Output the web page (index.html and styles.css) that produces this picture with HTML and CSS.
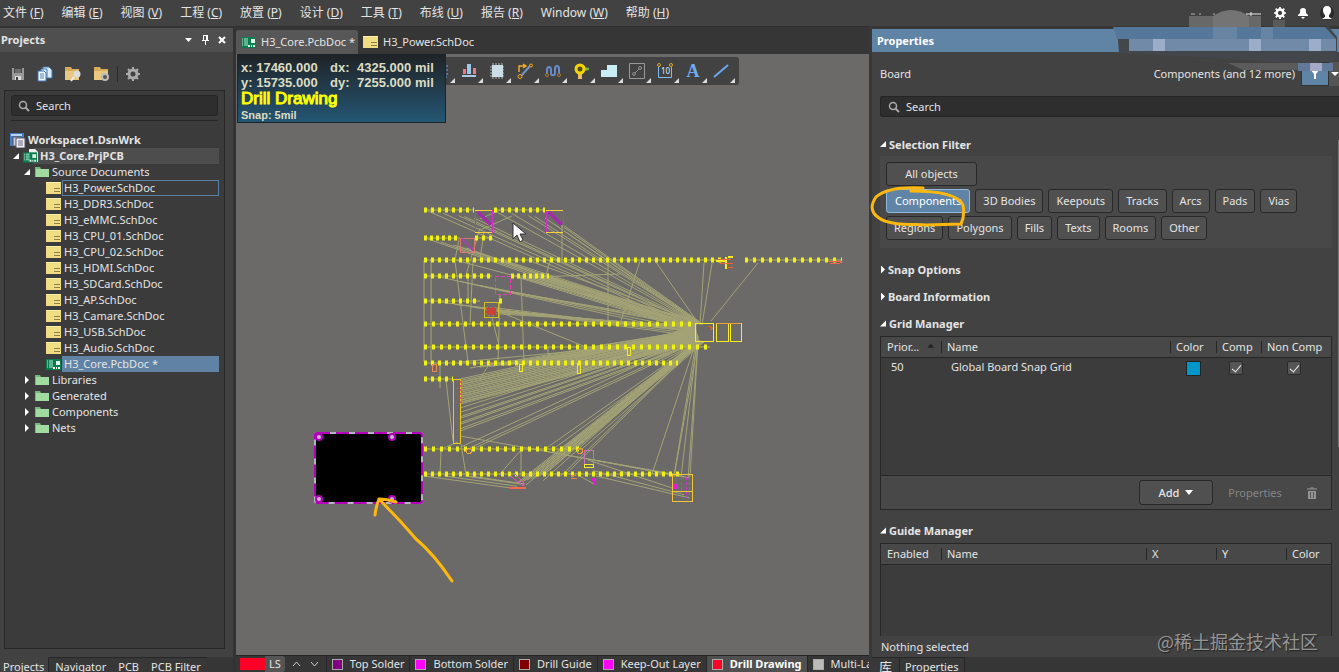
FILE: index.html
```html
<!DOCTYPE html>
<html lang="zh-CN">
<head>
<meta charset="utf-8">
<title>H3_Core.PcbDoc</title>
<link rel="stylesheet" href="styles.css">
</head>
<body>
<svg class="defs" aria-hidden="true">
  <symbol id="sch" viewBox="0 0 15 12"><rect width="15" height="12" fill="#f0dc82"/><path d="M0 0h15v1H0z" fill="#fff0b0"/><path d="M8 6.500h6M8 9.500h6" stroke="#8f7d45"/></symbol>
  <symbol id="pcb" viewBox="0 0 15 12"><path d="M0 1h15v11H0z" fill="#087d50"/><path d="M1 3h1M3 3h4M1 5h1M3 5h4M1 7h1M3 7h4M1 9h1M3 9h4" stroke="#b9ead0"/><path d="M10 3h4v4h-4z" fill="#e8f5e9"/><path d="M7 10h2M10 10h1M12 10h2" stroke="#e8f5e9" stroke-width="2"/></symbol>
  <symbol id="dir" viewBox="0 0 14 12"><path d="M0 1h5l1 2h7v8H0z" fill="#74b975"/><path d="M1 3h13v8H1z" fill="#a2dba2"/></symbol>
  <symbol id="mag" viewBox="0 0 12 12"><circle cx="5" cy="5" r="3.500" fill="none" stroke="#aaa" stroke-width="1.500"/><path d="M7.500 7.500 11 11" stroke="#aaa" stroke-width="2"/></symbol>
  <symbol id="gear" viewBox="0 0 14 14"><circle cx="7" cy="7" r="4" fill="none" stroke="currentColor" stroke-width="3"/><path d="M7 0v3M7 11v3M0 7h3M11 7h3M2 2l2 2M10 10l2 2M2 12l2-2M10 4l2-2" stroke="currentColor" stroke-width="2"/></symbol>
</svg>
<header class="menubar">
  <nav class="menus">
    <button>文件 (<u>F</u>)</button><button>编辑 (<u>E</u>)</button><button>视图 (<u>V</u>)</button><button>工程 (<u>C</u>)</button><button>放置 (<u>P</u>)</button><button>设计 (<u>D</u>)</button><button>工具 (<u>T</u>)</button><button>布线 (<u>U</u>)</button><button>报告 (<u>R</u>)</button><button>Window (<u>W</u>)</button><button>帮助 (<u>H</u>)</button>
  </nav>
  <div class="account">
    <button aria-label="Settings"><svg width="12" height="12"><use href="#gear"/></svg></button>
    <button aria-label="Notifications"><svg width="12" height="12"><path d="M1 9V8l2-2V4c0-2 1-3 3-3s3 1 3 3v2l2 2v1zM4 10h4l-2 2z" fill="#fff"/></svg></button>
    <button aria-label="Account"><svg width="14" height="14"><circle cx="7" cy="7" r="7" fill="#2c2c2c"/><path d="M7 0c3 0 4 2 4 4 0 3-1 4-2 5v2l3 2H2l3-2V9C4 8 3 7 3 4c0-2 1-4 4-4z" fill="#fff"/></svg></button>
  </div>
</header>
<main class="workspace">
  <section class="projects">
    <div class="title"><h2>Projects</h2>
      <svg width="8" height="8"><path d="M0 2h7L3.500 6z" fill="#fff"/></svg>
      <svg width="9" height="10"><path d="M2 0h5v5h1v1H1V5h1zM4 6h1v4H4z" fill="#fff"/><path d="M3 1h2v4H3z" fill="#555"/></svg>
      <svg width="8" height="8"><path d="M1 1l6 6M7 1 1 7" stroke="#fff" stroke-width="2"/></svg>
    </div>
    <div class="tools">
      <button aria-label="Save"><svg width="16" height="16"><path d="M2 2h12v12H2z" fill="#999"/><path d="M4 2h8v5H4z" fill="#444"/><path d="M5 4h6M5 6h6" stroke="#999"/><path d="M5 10h6v4H5z" fill="#ddd"/><path d="M6 11h2v3H6z" fill="#444"/></svg></button>
      <button aria-label="Copy"><svg width="16" height="16"><path d="M6 1h6l3 3v8H6z" fill="#dceafc" stroke="#4176b5"/><path d="M4 3h6v9H4z" fill="#dceafc" stroke="#4176b5"/><path d="M1 5h6l2 2v8H1z" fill="#edf5ff" stroke="#4176b5"/><path d="M3 8h4M3 10h4M3 12h4" stroke="#5685bd"/></svg></button>
      <button aria-label="Find folder"><svg width="18" height="16"><path d="M1 1h6l1 2h7v11H1z" fill="#d7ac5c"/><path d="M1 5h14v9H1z" fill="#e8c883"/><circle cx="13" cy="8" r="3.500" fill="#ddd"/><path d="M10 11l-3 4" stroke="#eee" stroke-width="2"/></svg></button>
      <button aria-label="Folder settings"><svg width="18" height="16"><path d="M1 1h6l1 2h7v11H1z" fill="#d7ac5c"/><path d="M1 5h14v9H1z" fill="#e8c883"/><circle cx="12" cy="11" r="3" fill="#555" stroke="#bbb" stroke-width="2"/></svg></button>
      <i></i>
      <button class="cog" aria-label="Options"><svg width="14" height="14"><use href="#gear"/></svg></button>
    </div>
    <div class="treebox">
      <label class="search"><svg width="12" height="12"><use href="#mag"/></svg><input aria-label="Search projects" placeholder="Search"></label>
      <hr>
      <ul class="tree">
        <li class="root"><svg width="16" height="15"><path d="M0 0h14v13H0z" fill="#447dc7"/><path d="M1 1h11v2H1z" fill="#b9d4f3"/><path d="M3 4h8v9H3z" fill="#ccd" stroke="#555"/><path d="M6 5h9v10H6z" fill="#eef" stroke="#555"/><path d="M8 8h5M8 10h5M8 12h5" stroke="#667"/></svg><b>Workspace1.DsnWrk</b></li>
        <li class="project"><i class="open"></i><svg width="16" height="14"><path d="M6 0h6l3 3v10H6z" fill="#eee"/><use href="#pcb" y="2" width="14" height="12"/></svg><b>H3_Core.PrjPCB</b></li>
        <li class="group"><i class="open"></i><svg width="14" height="12"><use href="#dir"/></svg><span>Source Documents</span></li>
        <li class="doc focus"><svg width="15" height="12"><use href="#sch"/></svg><span>H3_Power.SchDoc</span></li>
        <li class="doc"><svg width="15" height="12"><use href="#sch"/></svg><span>H3_DDR3.SchDoc</span></li>
        <li class="doc"><svg width="15" height="12"><use href="#sch"/></svg><span>H3_eMMC.SchDoc</span></li>
        <li class="doc"><svg width="15" height="12"><use href="#sch"/></svg><span>H3_CPU_01.SchDoc</span></li>
        <li class="doc"><svg width="15" height="12"><use href="#sch"/></svg><span>H3_CPU_02.SchDoc</span></li>
        <li class="doc"><svg width="15" height="12"><use href="#sch"/></svg><span>H3_HDMI.SchDoc</span></li>
        <li class="doc"><svg width="15" height="12"><use href="#sch"/></svg><span>H3_SDCard.SchDoc</span></li>
        <li class="doc"><svg width="15" height="12"><use href="#sch"/></svg><span>H3_AP.SchDoc</span></li>
        <li class="doc"><svg width="15" height="12"><use href="#sch"/></svg><span>H3_Camare.SchDoc</span></li>
        <li class="doc"><svg width="15" height="12"><use href="#sch"/></svg><span>H3_USB.SchDoc</span></li>
        <li class="doc"><svg width="15" height="12"><use href="#sch"/></svg><span>H3_Audio.SchDoc</span></li>
        <li class="doc selected"><svg width="15" height="12"><use href="#pcb"/></svg><span>H3_Core.PcbDoc *</span></li>
        <li class="group"><i></i><svg width="14" height="12"><use href="#dir"/></svg><span>Libraries</span></li>
        <li class="group"><i></i><svg width="14" height="12"><use href="#dir"/></svg><span>Generated</span></li>
        <li class="group"><i></i><svg width="14" height="12"><use href="#dir"/></svg><span>Components</span></li>
        <li class="group"><i></i><svg width="14" height="12"><use href="#dir"/></svg><span>Nets</span></li>
      </ul>
    </div>
    <nav class="paneltabs"><button class="on">Projects</button><button>Navigator</button><button>PCB</button><button>PCB Filter</button></nav>
  </section>
  <section class="editor">
    <nav class="doctabs">
      <button class="on"><svg width="15" height="12"><use href="#pcb"/></svg>H3_Core.PcbDoc *</button>
      <button><svg width="15" height="12"><use href="#sch"/></svg>H3_Power.SchDoc</button>
    </nav>
    <div class="board">
      <svg class="drawing" width="634" height="602" viewBox="236 54 634 602" aria-label="PCB layout">
        <path id="nets" class="nets"/>
        <g id="rows"></g>
        <g class="outline">
          <path d="M475 210h17v22h-17zM546 210h17v22h-17z" stroke="#d62bd0"/><path d="M475 232h17M546 232h17M475 210h17M546 210h17" stroke="#ffd038"/>
          <path d="M478 212l13 13M549 212l13 13" stroke="#a02ea8" stroke-width="3"/>
          <path d="M460 238h14v14h-14z" stroke="#d87870"/><path d="M462 239l12 12" stroke="#a244a5" stroke-width="2"/>
          <path d="M495 276h15v18h-15z" stroke="#ee3bb4" stroke-dasharray="4 2"/><path d="M484 302h14v15h-14z" stroke="#d4bf21"/><path d="M486 307h10v8h-10z" fill="#c9423a" stroke="#8c8170" stroke-dasharray="2 2"/>
          <path d="M695 323h18v18h-18zM716 323h12v18h-12zM730 323h11v18h-11z"/><path d="M716 323h25" stroke="#e8a535"/><path d="M708 326l5 2-3 2" stroke="#c66b28"/>
          <path d="M726 257v12M716 261h9M728 257h5" stroke-width="2"/><path d="M717 259h14M720 263h13M728 267h5" stroke="#f06542"/>
          <path d="M453 379h7v64h-7z" stroke="#ecc818"/><path d="M457 381v60" stroke="#ce35c6" stroke-dasharray="2 4"/><path d="M461 381v22" stroke="#f45545" stroke-width="2" stroke-dasharray="2 2"/>
          <circle cx="469" cy="451" r="2.500" stroke="#f1a12b"/><circle cx="580" cy="451" r="2.500" stroke="#f1a12b"/>
          <path d="M584 450h9v14h-9z" stroke="#c674b5"/><path d="M584 464h9v3h-9z"/><path d="M510 476l14 10M515 474l10 10" stroke="#cb5aa4"/><path d="M510 488h16" stroke="#f6674b" stroke-width="2"/>
          <path d="M591 478h5l-1 8z" fill="#e815df" stroke="none"/><path d="M571 475h5M571 478h6" stroke="#ee8142"/>
          <path d="M675 478v11M681 477v20M689 477v22M686 477v21" stroke="#d03acb" stroke-dasharray="3 2"/><path d="M672 474h20v27h-20zM672 491h20" stroke="#f4c53a"/><path d="M673 484h5v5h-5z" fill="#e919dd" stroke="none"/>
          <path d="M627 347h3v8h-3zM577 363h3v10h-3zM519 364h3v7h-3z"/><path d="M432 364h4v7h-4zM489 363h4" stroke="#ea8951"/>
          <path d="M828 261h14l-2 2h-10" stroke="#ee614b"/>
        </g>
        <rect x="315" y="433" width="107" height="70" rx="2" fill="#000" stroke="#b5b5bd" stroke-width="2"/><rect x="315" y="433" width="107" height="70" rx="2" fill="none" stroke="#b400bd" stroke-width="2" stroke-dasharray="13 6"/>
        <g fill="#c9b8d2" stroke="#b000b8" stroke-width="2"><circle cx="319" cy="437" r="3"/><circle cx="392" cy="437" r="3"/><circle cx="319" cy="499" r="3"/><circle cx="392" cy="499" r="3"/></g>
        <path class="ink" d="M452 581Q434 554 416 539L401 522 379 499M375 515Q376 506 379 499Q386 499 396 502"/>
        <path d="M513 223v16l4-4 3 7 3-2-3-6h6z" fill="#fff" stroke="#333"/>
      </svg>
      <div class="toolbar">
        <button aria-label="Select"><svg width="16" height="16"><path d="M2 2h12v12H2z" fill="none" stroke="#77a3df" stroke-dasharray="2 2"/></svg></button>
        <button aria-label="Align"><svg width="16" height="16"><path d="M2 6h3v5H2zM12 5h3v6h-3z" fill="#ee7888"/><path d="M6 1h4v10H6z" fill="#9dc8e6"/><path d="M1 13h14" stroke="#aac9e4" stroke-width="2"/></svg></button>
        <button aria-label="Place component"><svg width="16" height="16"><path d="M1 4h14M1 7h14M1 10h14M1 13h14M4 0v16M7 0v16M10 0v16M13 0v16" stroke="#b5b5b5"/><path d="M3 2h11v12H3z" fill="#cbdde5"/></svg></button>
        <button aria-label="Route"><svg width="16" height="16"><path d="M2 9V3h6M6 1l3 2-3 2" fill="none" stroke="#edac28" stroke-width="1.500"/><path d="M4 13l9-10" stroke="#7695bf" stroke-width="2"/><g fill="#504525" stroke="#edac28"><circle cx="3" cy="13.500" r="2"/><circle cx="14" cy="2.500" r="1.500"/></g></svg></button>
        <button aria-label="Tune length"><svg width="16" height="16"><path d="M2 11V7c0-4 4-4 4 0v3c0 3 4 3 4 0V6c0-4 4-4 4 0v5" fill="none" stroke="#668acb" stroke-width="2"/><circle cx="2" cy="12" r="1.500" fill="none" stroke="#a97b28"/><circle cx="14" cy="12" r="1.500" fill="none" stroke="#a97b28"/></svg></button>
        <button aria-label="Place via"><svg width="16" height="16"><path d="M10 4l6 1v2l-6 1z" fill="#75b943"/><path d="M5 9h4v7H5z" fill="#efbc64"/><circle cx="7" cy="6" r="4" fill="#504d22" stroke="#f7d600" stroke-width="3"/></svg></button>
        <button aria-label="Place polygon"><svg width="16" height="16"><path d="M0 7h6V2h10v12H0z" fill="#c9edf5"/></svg></button>
        <button aria-label="Design rule"><svg width="16" height="16"><path d="M.5.5h15v15H.5z" fill="none" stroke="#999"/><path d="M5 11l6-6" stroke="#888"/><circle cx="5" cy="11" r="1.500" fill="#555" stroke="#888"/><circle cx="11" cy="5" r="1.500" fill="#555" stroke="#888"/></svg></button>
        <button aria-label="Dimension"><svg width="16" height="16"><path d="M1.500 4v10.500h13V4" fill="none" stroke="#81bceb"/><circle cx="2" cy="2" r="1.500" fill="none" stroke="#dfa52b"/><circle cx="14" cy="2" r="1.500" fill="none" stroke="#dfa52b"/><text x="4" y="11" class="dim">10</text></svg></button>
        <button aria-label="Place text"><span class="letter">A</span></button>
        <button aria-label="Place line"><svg width="16" height="16"><path d="M1 14 15 2" stroke="#6aa8f5" stroke-width="2"/></svg></button>
      </div>
      <div class="hud"><div class="coords"><span>x: 17460.000</span><span>dx:</span><span>4325.000</span><span>mil</span><span>y: 15735.000</span><span>dy:</span><span>7255.000</span><span>mil</span></div><strong>Drill Drawing</strong><small>Snap: 5mil</small></div>
    </div>
    <nav class="layers">
      <span class="current"></span><button class="ls">LS</button>
      <button class="arrow" aria-label="Previous layer"><svg width="9" height="6"><path d="M1 5l3.500-4L8 5" fill="none" stroke="#ccc"/></svg></button><button class="arrow" aria-label="Next layer"><svg width="9" height="6"><path d="M1 1l3.500 4L8 1" fill="none" stroke="#ccc"/></svg></button>
      <button class="layer"><i class="purple"></i>Top Solder</button><button class="layer"><i class="magenta"></i>Bottom Solder</button><button class="layer"><i class="maroon"></i>Drill Guide</button><button class="layer"><i class="magenta"></i>Keep-Out Layer</button><button class="layer on"><i class="red"></i>Drill Drawing</button><button class="layer"><i class="gray"></i>Multi-La</button>
    </nav>
  </section>
  <section class="properties">
    <div class="title blue"><h2>Properties</h2></div>
    <div class="scope"><span>Board</span><span class="what">Components (and 12 more)</span><button class="filter" aria-label="Filter"><svg width="12" height="12"><path d="M1 1h10L7 6v5H5V6z" fill="#fff"/></svg></button><button class="more" aria-label="Filter options"><svg width="8" height="8"><path d="M0 2h8L4 6z" fill="#fff"/></svg></button></div>
    <label class="search wide"><svg width="12" height="12"><use href="#mag"/></svg><input aria-label="Search properties" placeholder="Search"></label>
    <div class="sections">
      <h3><i class="open"></i>Selection Filter</h3>
      <div class="filters">
        <div><button class="all">All objects</button></div>
        <div><button class="on">Components</button><button>3D Bodies</button><button>Keepouts</button><button>Tracks</button><button>Arcs</button><button>Pads</button><button>Vias</button></div>
        <div><button>Regions</button><button>Polygons</button><button>Fills</button><button>Texts</button><button>Rooms</button><button>Other</button></div>
      </div>
      <h3 class="after"><i></i>Snap Options</h3>
      <h3><i></i>Board Information</h3>
      <h3><i class="open"></i>Grid Manager</h3>
      <div class="manager">
        <table class="grid"><colgroup><col class="c1"><col><col class="c3"><col class="c4"><col class="c5"></colgroup>
          <thead><tr><th>Prior...<b class="sort"></b></th><th>Name</th><th>Color</th><th>Comp</th><th>Non Comp</th></tr></thead>
          <tbody><tr><td>50</td><td>Global Board Snap Grid</td><td><i class="cyan"></i></td><td><input type="checkbox" aria-label="Comp" checked></td><td><input type="checkbox" aria-label="Non Comp" checked></td></tr></tbody>
        </table>
        <div class="actions"><button class="add">Add <svg width="8" height="5"><path d="M0 0h8L4 5z" fill="#fff"/></svg></button><button class="dim-btn" disabled>Properties</button><button class="bin" aria-label="Delete" disabled><svg width="10" height="12"><path d="M0 2h10M3 1h4" stroke="#aaa" stroke-width="1"/><path d="M1 4h8v8H1z" fill="#aaa"/><path d="M3.500 5v6M6.500 5v6" stroke="#555"/></svg></button></div>
      </div>
      <h3><i class="open"></i>Guide Manager</h3>
      <div class="manager guides">
        <table><colgroup><col class="c1"><col><col class="cx"><col class="cx"><col class="c4"></colgroup><thead><tr><th>Enabled</th><th>Name</th><th>X</th><th>Y</th><th>Color</th></tr></thead></table>
      </div>
    </div>
    <div class="status">Nothing selected</div>
    <nav class="paneltabs right"><button class="lib">库</button><button class="props">Properties</button></nav>
    <svg class="mark" width="100" height="46" aria-hidden="true"><path class="ink" d="M55 3Q20 1 8 12-1 25 11 33C22 41 45 39 58 40L93 39Q97 31 95 20C90 9 68 6 43 6"/></svg>
    <svg class="mosaic" width="230" height="70" aria-hidden="true">
      <path d="M80 9h72v14H80z" fill="#686868"/><path d="M104 9q18-12 36 0v14h-36z" fill="#747474"/><path d="M137 7h15M142 5v4" stroke="#eee"/><path d="M82 7h4M90 7h2M104 7h2" stroke="#aaa"/>
      <path d="M164 13h12v14h-12z" fill="#5a5a5a"/><path d="M8 20h212l8 10v23q-30 6-60 2L90 50 10 46z" fill="#43474b"/>
      <path d="M4 20h212l11 12H8z" fill="#55789a"/><path d="M20 32h207v12H20z" fill="#718aa7"/><path d="M44 32h12v12H44zM140 32h12v12h-12zM200 32h12v12h-12z" fill="#9badc9"/><path d="M104 20h24v12h-24zM152 20h12v12h-12z" fill="#6785a3"/>
      <path d="M119 56h85v7h-70z" fill="#5b5b5c"/><path d="M189 56h35v8h-35z" fill="#63799a"/><path d="M201 56h12v8h-12z" fill="#a3a9c7"/>
    </svg>
    <div class="watermark">@稀土掘金技术社区</div>
  </section>
</main>
<script src="board.js"></script>
</body>
</html>
```
FILE: styles.css
```css
* { box-sizing: border-box; }
html, body { height: 100%; }
body { margin: 0; overflow: hidden; display: flex; flex-direction: column; background: #363636; color: #e4e4e4; font: 11px/16px "Noto Sans", "Noto Sans CJK SC", sans-serif; }
button { font: inherit; color: inherit; background: none; border: 0; margin: 0; padding: 0; white-space: nowrap; }
svg { display: block; flex: none; }
h2, h3, ul { margin: 0; padding: 0; }
.defs { position: absolute; width: 0; height: 0; }
.menubar { flex: none; height: 26px; display: flex; align-items: center; justify-content: space-between; background: #424242; padding: 0 5px 0 3px; font-size: 12px; }
.menus { display: flex; gap: 18px; }
.account { display: flex; gap: 11px; color: #fff; z-index: 3; }
.workspace { flex: 1; min-height: 0; display: grid; grid-template-columns: 236px minmax(0, 1fr) 467px; }
.workspace > section { min-width: 0; min-height: 0; display: flex; flex-direction: column; }

.projects { background: #424242; border-right: 3px solid #333; border-top: 2px solid #333; }
.title { height: 24px; flex: none; display: flex; align-items: center; gap: 8px; padding: 0 7px 0 1px; background: #4f4f4f; }
.title h2 { flex: 1; font-size: 11px; line-height: 16px; }
.tools { height: 38px; flex: none; display: flex; align-items: center; gap: 11px; padding: 5px 10px 0; }
.tools i { width: 1px; height: 16px; margin-left: -5px; background: #292929; }
.tools .cog { color: #aaa; margin-left: -3px; }
.treebox { flex: 1; margin: 0 8px 8px 4px; border: 1px solid #272727; background: #3b3b3b; }
.search { height: 21px; margin: 4px 6px 0; padding: 0 6px; display: flex; align-items: center; gap: 6px; background: #2e2e2e; border: 1px solid #252525; border-radius: 3px; }
.search input { flex: 1; min-width: 0; background: none; border: 0; outline: 0; padding: 0; color: #e4e4e4; font: inherit; }
.search input::placeholder { color: #e4e4e4; }
.treebox hr { margin: 4px 6px 11px; border: 0; border-top: 1px solid #272727; }
.tree { list-style: none; }
.tree li { height: 16px; display: flex; align-items: center; margin-right: 5px; }
.tree span, .tree b { padding-left: 3px; line-height: 16px; }
.tree .root { padding-left: 5px; }
.tree .root b { padding-left: 2px; }
.tree .project { margin-left: 8px; background: linear-gradient(to right, transparent 20px, #4d4d4d 20px); }
.tree .project b { padding-left: 1px; }
.tree .group { padding-left: 19px; }
.tree .doc { padding-left: 41px; }
.tree .doc span { flex: 1; border: 1px solid transparent; padding-left: 1px; line-height: 14px; margin-left: 1px; }
.tree .focus span { border-color: #5d7f9e; }
.tree .selected span { background: #5f82a5; border-color: #5f82a5; }
.tree i, h3 i { flex: none; width: 6px; height: 8px; background: #fff; clip-path: polygon(1px 0, 5px 4px, 1px 8px); }
.tree i { margin-right: 5px; }
.tree i.open, h3 i.open { clip-path: polygon(6px 1px, 6px 7px, 0 7px); }
.tree .project i { margin-right: 4px; }
.paneltabs { flex: none; height: 15px; display: flex; overflow: hidden; background: #363636; }
.paneltabs button { height: 18px; padding: 0 6px; line-height: 16px; border-top: 1px solid #272727; background: #383838; }
.paneltabs .on { background: #424242; border-top-color: #424242; border-right: 1px solid #272727; padding: 0 4px 0 3px; }

.editor { border-right: 3px solid #383838; }
.doctabs { flex: none; height: 28px; padding-top: 3px; display: flex; background: #363636; border-top: 1px solid #303030; }
.doctabs button { display: flex; align-items: center; gap: 5px; padding: 0 5px; }
.doctabs .on { background: #575757; border-radius: 3px 3px 0 0; padding: 0 3px 0 5px; }
.board { flex: 1; min-height: 0; overflow: hidden; position: relative; background: #6c6a68; }
.drawing { position: absolute; left: 0; top: 0; }
.nets { fill: none; stroke: #a3a376; stroke-width: 1; }
.pads { stroke: #f0f30a; stroke-width: 5; }
.wire { stroke: #b5b05a; stroke-width: 1; }
.outline { fill: none; stroke: #f7ec22; shape-rendering: crispEdges; }
.ink { fill: none; stroke: #fcb80f; stroke-width: 3; stroke-linecap: round; stroke-linejoin: round; }
.toolbar { position: absolute; left: 191px; top: 3px; height: 28px; display: flex; background: #424242; border-radius: 3px; padding-right: 4px; }
.toolbar button { width: 28px; display: grid; place-items: center; position: relative; }
.toolbar button::after { content: ""; position: absolute; right: 0; bottom: 2px; width: 5px; height: 5px; background: #ddd; clip-path: polygon(100% 0, 100% 100%, 0 100%); }
.dim { font: 8px "Noto Sans", sans-serif; fill: #d7ecff; }
.letter { font: bold 18px/20px "Liberation Serif", serif; color: #6fabf0; }
.hud { position: absolute; left: 1px; top: 0; width: 209px; height: 69px; padding: 5px 4px 0 3px; border: 1px solid #1b242a; background: linear-gradient(#202326, #245673); color: #dcdcc3; font: bold 13px/15px "Liberation Sans", Arial, sans-serif; display: flex; flex-direction: column; overflow: hidden; }
.coords { display: grid; grid-template-columns: 89px 27px 58px 1fr; white-space: nowrap; }
.hud strong { color: #ff0; font-size: 17px; line-height: 18px; font-weight: normal; -webkit-text-stroke: 1px #ff0; }
.hud small { font-size: 11px; line-height: 14px; }
.layers { flex: none; height: 17px; display: flex; overflow: hidden; background: #363636; border-top: 1px solid #242424; padding-left: 4px; line-height: 16px; }
.current { flex: none; width: 25px; margin: 2px 0; background: #ff0026; }
.ls { flex: none; padding: 0 4px; background: #555; border-radius: 0 3px 3px 0; margin-right: 3px; }
.arrow { flex: none; width: 18px; display: grid; place-items: center; }
.layer { flex: none; display: flex; align-items: center; padding: 0 5px; border-left: 1px solid #272727; height: 16px; }
.layers .arrow + .layer { margin-left: 2px; }
.layer i { width: 11px; height: 11px; border: 1px solid #aaa; margin-right: 7px; }
.layer.on { background: #505050; font-weight: bold; color: #fff; }
.purple { background: #800080; } .magenta { background: #f0f; } .maroon { background: #800000; } .red { background: #ff0026; } .gray { background: #bbb; }

.properties { position: relative; background: #424242; border-top: 3px solid #383838; }
.blue { height: 23px; background: #5f84a6; padding-left: 5px; color: #fff; }
.scope { flex: none; height: 44px; display: flex; align-items: center; padding-left: 8px; }
.scope .what { margin-left: auto; padding-right: 6px; }
.filter { width: 28px; height: 24px; display: grid; place-items: center; background: #5f84a6; border: 1px solid #333; }
.more { width: 10px; height: 24px; padding-left: 2px; display: grid; align-items: center; background: #555; overflow: hidden; }
.wide { flex: none; margin: 0 0 0 8px; padding: 0 7px; border-right: 0; border-radius: 3px 0 0 3px; }
.sections { flex: 1; min-height: 0; overflow: hidden; padding: 15px 7px 0 8px; background: linear-gradient(#777, #777) right 23px / 1px 307px no-repeat; }
h3 { font-size: 11px; line-height: 27px; display: flex; align-items: center; gap: 3px; height: 27px; }
h3 i:not(.open) { margin-right: -1px; }
.filters { display: flex; flex-direction: column; gap: 3px; height: 92px; padding: 6px; background: #484848; }
.sections > h3:first-child { height: 24px; }
.filters > div { display: flex; gap: 5px; }
.filters button { height: 24px; padding: 0 7px; line-height: 20px; background: #505050; border: 1px solid #282828; border-radius: 3px; }
.filters .all { width: 91px; }
.filters .on { background: #5f84a6; border-color: #91b9df; color: #fff; padding: 0 8px; }
.after { margin-top: 8px; }
.manager { height: 174px; margin-top: -1px; display: flex; flex-direction: column; justify-content: space-between; background: #3c3c3c; border: 1px solid #272727; }
.manager + h3 { margin-top: 7px; }
table { width: 100%; table-layout: fixed; border-collapse: collapse; }
.c1 { width: 60px; } .c3 { width: 46px; } .c4 { width: 45px; } .c5 { width: 70px; } .cx { width: 70px; }
th { height: 20px; padding: 0 0 0 6px; text-align: left; font-weight: normal; white-space: nowrap; background: linear-gradient(#272727, #272727) left center / 1px 12px no-repeat #484848; border-bottom: 1px solid #272727; }
th:first-child { background: #484848; }
.sort { display: inline-block; width: 7px; height: 4px; margin: 0 0 3px 8px; background: #222; clip-path: polygon(50% 0, 100% 100%, 0 100%); }
td { height: 20px; padding: 0 0 0 10px; white-space: nowrap; }
td:nth-child(n+3) { text-align: center; padding: 0 5px 0 0; }
td:nth-child(3) { padding: 0; }
td input { appearance: none; width: 14px; height: 14px; margin: 0; vertical-align: middle; background: #555; border: 1px solid #2a2a2a; border-radius: 2px; position: relative; }
td input:checked::after { content: ""; position: absolute; left: 4px; top: 1px; width: 4px; height: 8px; border: solid #eee; border-width: 0 1px 1px 0; rotate: 40deg; }
.cyan { display: inline-block; width: 15px; height: 15px; background: #0097c9; border: 1px solid #222; vertical-align: middle; }
.actions { height: 34px; display: flex; align-items: center; justify-content: flex-end; background: #484848; border-top: 1px solid #272727; padding-right: 14px; }
.add { width: 74px; height: 25px; display: flex; align-items: center; justify-content: center; gap: 6px; background: #505050; border: 1px solid #272727; border-radius: 3px; font-weight: 500; }
.dim-btn { width: 84px; color: #858585; }
.bin { padding-left: 10px; opacity: .8; }
.guides { height: 94px; border-bottom: 0; }
.status { flex: none; height: 21px; padding: 3px 9px 0; }
.right .lib { width: 28px; padding: 0; font-size: 13px; border-right: 1px solid #272727; }
.right .props { padding: 0 6px 0 5px; border-right: 1px solid #272727; }
.mark { position: absolute; left: -4px; top: 156px; }
.mosaic { position: absolute; right: 0; top: -22px; }
.watermark { position: absolute; right: 21px; bottom: 18px; font: 18px/26px "Noto Sans CJK SC", sans-serif; color: #969696; text-shadow: 1px 1px 1px #222; }
```
FILE: board.js
```js
// Pad rows: y, first x, last x, dash pitch.
const rows = [[210,424,474,7],[210,494,545,7],[238,424,460,6],[238,475,493,7],[260,424,722,7],[260,745,842,8],[276,424,492,7],[276,511,549,6],[301,424,480,7],[301,499,502,7],[324,424,696,8],[347,424,710,8],[363,424,678,7],[379,424,453,7],[449,424,582,8],[474,424,680,7]];
document.getElementById('rows').innerHTML = rows.map(([y, a, b, p]) =>
  `<path class="wire" d="M${a} ${y}H${b}"/><path class="pads" style="stroke-dasharray:3 ${p - 3}" d="M${a} ${y}H${b}"/>`).join('');

const d = [];
const line = (a, b, c, e) => d.push(`M${a} ${b}L${c} ${e}`);
// Each fan runs from points along one segment to the same number on another,
// with a small repeating variation so that neighbouring nets group together.
const fan = (n, x1, y1, x2, y2, u1, v1, u2, v2) => {
  for (let i = 0; i < n; i++) {
    const t = n > 1 ? Math.min(1, (i + (i * 7 % 5) / 6) / (n - 1)) : 0;
    line(x1 + (x2-x1)*t, y1 + (y2-y1)*t, u1 + (u2-u1)*t, v1 + (v2-v1)*t);
  }
};
fan(5,428,211,474,218,696,329,696,322);
fan(5,495,211,545,218,697,323,700,323);
fan(3,554,224,563,225,696,322,700,322);
fan(5,428,239,466,248,695,332,696,327);
fan(3,455,260,530,261,695,324,698,322);
fan(5,440,277,500,290,695,334,696,324);
fan(12,520,278,548,276,696,332,697,322);
fan(6,440,302,496,311,695,336,696,328);
fan(5,496,308,500,314,696,332,696,326);
fan(16,520,362,670,362,695,332,699,341);
fan(10,590,347,690,347,695,330,698,338);
fan(22,460,379,460,404,696,328,699,342);
fan(8,460,408,460,431,696,334,700,342);
fan(8,470,368,520,364,695,330,699,337);
fan(3,461,447,475,448,697,338,700,342);
fan(13,516,484,545,474,698,340,702,342);
fan(7,545,449,582,449,699,341,704,342);
fan(4,674,476,690,477,696,342,698,342);
fan(2,652,474,674,477,696,342,698,342);
fan(3,460,436,588,459,673,474,690,478);
fan(4,424,476,470,476,511,488,525,484);
fan(4,526,485,565,475,698,340,700,342);
fan(3,588,460,596,476,672,488,690,498);
[[424,260,424,362],[431,260,431,362],[455,261,468,362],[459,239,455,260],[480,228,466,275],[484,232,480,260],
 [500,294,498,363],[468,277,468,300],[521,277,524,364],[608,262,608,326],[562,225,562,260],[550,260,546,276],
 [440,363,440,388],[446,380,453,441],[458,442,441,449],[441,450,440,475],[461,444,466,475],[521,450,521,476],
 [492,318,500,349],[640,261,620,324],[704,263,700,325],[712,263,702,325],[758,263,711,321],[656,262,698,323],
 [500,312,586,347],[490,363,480,379],[512,216,480,230],[578,475,594,484],[521,450,499,475],[473,260,470,325],
 [500,210,480,219],[534,277,620,274],[548,347,548,363],[618,347,460,362]].forEach(p => line(...p));
document.getElementById('nets').setAttribute('d', d.join(''));
```
